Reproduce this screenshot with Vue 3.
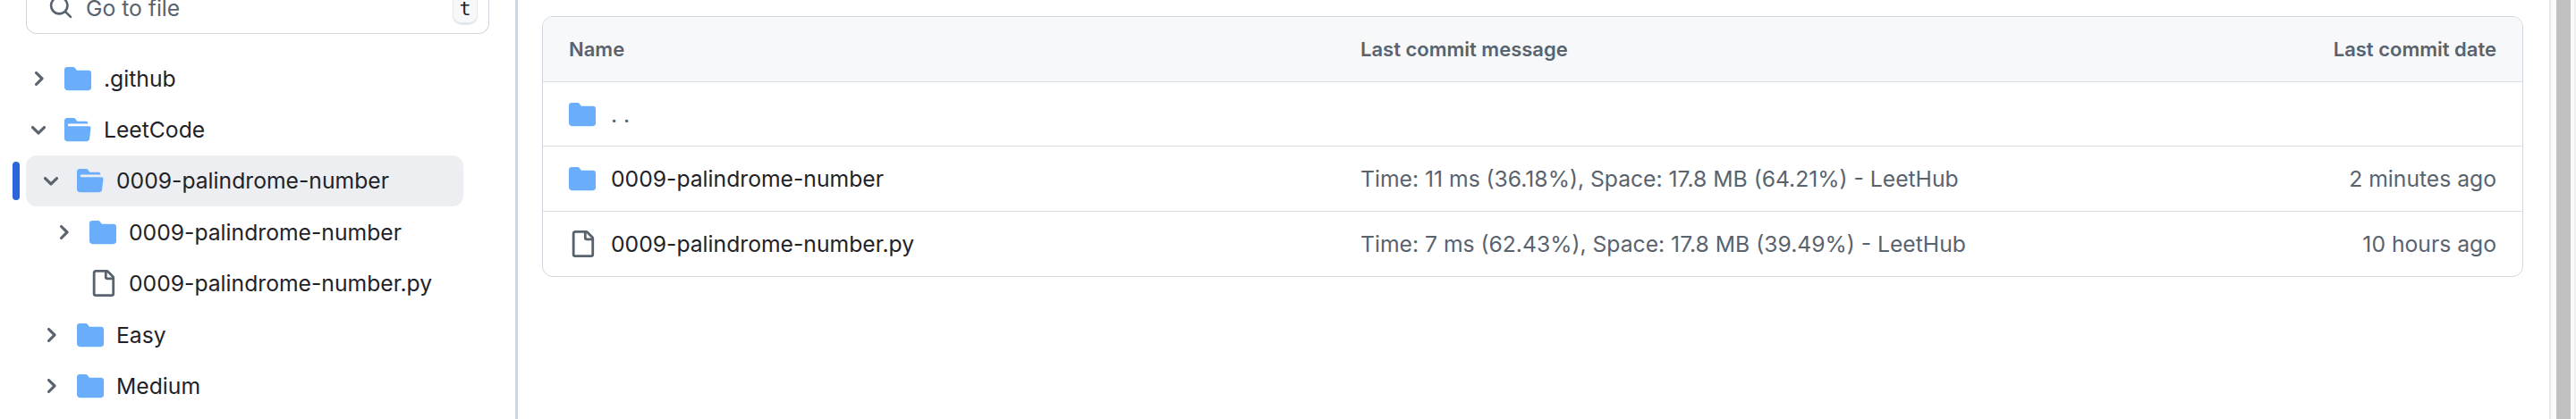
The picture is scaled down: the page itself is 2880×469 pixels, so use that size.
<template>
  <div class="page">
    <aside class="sidebar">
      <div class="search">
        <svg class="search-icon" viewBox="0 0 16 16" width="28" height="28"><path d="M10.68 11.74a6 6 0 0 1-7.922-8.982 6 6 0 0 1 8.982 7.922l3.04 3.04a.749.749 0 0 1-.326 1.275.749.749 0 0 1-.734-.215ZM11.5 7a4.499 4.499 0 1 0-8.997 0A4.499 4.499 0 0 0 11.5 7Z" /></svg>
        <span class="search-text">Go to file</span>
        <kbd class="key">t</kbd>
      </div>
      <ul class="tree">
        <li
          v-for="item in tree"
          :key="item.name + item.level"
          class="tree-row"
          :class="[`level-${item.level}`, { selected: item.selected }]"
        >
          <svg v-if="item.type === 'dir'" class="chev" viewBox="0 0 12 12" width="24" height="24">
            <path v-if="item.open" d="M6 8.825c-.2 0-.4-.1-.5-.2l-3.3-3.3c-.3-.3-.3-.8 0-1.1.3-.3.8-.3 1.1 0l2.7 2.7 2.7-2.7c.3-.3.8-.3 1.1 0 .3.3.3.8 0 1.1l-3.2 3.2c-.2.2-.4.3-.6.3Z" />
            <path v-else d="M4.7 10c-.2 0-.4-.1-.5-.2-.3-.3-.3-.8 0-1.1L6.9 6 4.2 3.3c-.3-.3-.3-.8 0-1.1.3-.3.8-.3 1.1 0l3.3 3.2c.3.3.3.8 0 1.1L5.3 9.7c-.2.2-.4.3-.6.3Z" />
          </svg>
          <span v-else class="chev"></span>
          <svg v-if="item.type === 'dir' && item.open" class="icon folder" viewBox="0 0 16 16" width="30" height="30"><path d="M.513 1.513A1.75 1.75 0 0 1 1.75 1h3.5c.55 0 1.07.26 1.4.7l.9 1.2a.25.25 0 0 0 .2.1H13a1 1 0 0 1 1 1v.5H2.75a.75.75 0 0 0 0 1.5h11.978a1 1 0 0 1 .994 1.117L15 13.25A1.75 1.75 0 0 1 13.25 15H1.75A1.75 1.75 0 0 1 0 13.25V2.75c0-.464.184-.91.513-1.237Z" /></svg>
          <svg v-else-if="item.type === 'dir'" class="icon folder" viewBox="0 0 16 16" width="30" height="30"><path d="M1.75 1A1.75 1.75 0 0 0 0 2.75v10.5C0 14.216.784 15 1.75 15h12.5A1.75 1.75 0 0 0 16 13.25v-8.5A1.75 1.75 0 0 0 14.25 3H7.5a.25.25 0 0 1-.2-.1l-.9-1.2C6.07 1.26 5.55 1 5 1H1.75Z" /></svg>
          <svg v-else class="icon file" viewBox="0 0 16 16" width="30" height="30"><path d="M2 1.75C2 .784 2.784 0 3.75 0h6.586c.464 0 .909.184 1.237.513l2.914 2.914c.329.328.513.773.513 1.237v9.586A1.75 1.75 0 0 1 13.25 16h-9.5A1.75 1.75 0 0 1 2 14.25Zm1.75-.25a.25.25 0 0 0-.25.25v12.5c0 .138.112.25.25.25h9.5a.25.25 0 0 0 .25-.25V6h-2.75A1.75 1.75 0 0 1 9 4.25V1.5Zm6.75.062V4.25c0 .138.112.25.25.25h2.688l-.011-.013-2.914-2.914-.013-.011Z" /></svg>
          <span class="tree-name">{{ item.name }}</span>
        </li>
      </ul>
    </aside>
    <main class="content">
      <div class="table">
        <div class="row head">
          <div class="col-name">Name</div>
          <div class="col-msg">Last commit message</div>
          <div class="col-date">Last commit date</div>
        </div>
        <div v-for="row in rows" :key="row.name" class="row">
          <div class="col-name name-cell">
            <svg v-if="row.type === 'dir'" class="icon folder" viewBox="0 0 16 16" width="30" height="30"><path d="M1.75 1A1.75 1.75 0 0 0 0 2.75v10.5C0 14.216.784 15 1.75 15h12.5A1.75 1.75 0 0 0 16 13.25v-8.5A1.75 1.75 0 0 0 14.25 3H7.5a.25.25 0 0 1-.2-.1l-.9-1.2C6.07 1.26 5.55 1 5 1H1.75Z" /></svg>
            <svg v-else class="icon file" viewBox="0 0 16 16" width="30" height="30"><path d="M2 1.75C2 .784 2.784 0 3.75 0h6.586c.464 0 .909.184 1.237.513l2.914 2.914c.329.328.513.773.513 1.237v9.586A1.75 1.75 0 0 1 13.25 16h-9.5A1.75 1.75 0 0 1 2 14.25Zm1.75-.25a.25.25 0 0 0-.25.25v12.5c0 .138.112.25.25.25h9.5a.25.25 0 0 0 .25-.25V6h-2.75A1.75 1.75 0 0 1 9 4.25V1.5Zm6.75.062V4.25c0 .138.112.25.25.25h2.688l-.011-.013-2.914-2.914-.013-.011Z" /></svg>
            <span :class="{ dots: row.name === '. .' }">{{ row.name }}</span>
          </div>
          <div class="col-msg">{{ row.msg }}</div>
          <div class="col-date">{{ row.date }}</div>
        </div>
      </div>
    </main>
    <div class="scrollbar"><div class="thumb"></div></div>
  </div>
</template>

<script setup>
const tree = [
  { name: '.github', type: 'dir', level: 0 },
  { name: 'LeetCode', type: 'dir', level: 0, open: true },
  { name: '0009-palindrome-number', type: 'dir', level: 1, open: true, selected: true },
  { name: '0009-palindrome-number', type: 'dir', level: 2 },
  { name: '0009-palindrome-number.py', type: 'file', level: 2 },
  { name: 'Easy', type: 'dir', level: 1 },
  { name: 'Medium', type: 'dir', level: 1 }
]

const rows = [
  { name: '. .', type: 'dir', msg: '', date: '' },
  { name: '0009-palindrome-number', type: 'dir', msg: 'Time: 11 ms (36.18%), Space: 17.8 MB (64.21%) - LeetHub', date: '2 minutes ago' },
  { name: '0009-palindrome-number.py', type: 'file', msg: 'Time: 7 ms (62.43%), Space: 17.8 MB (39.49%) - LeetHub', date: '10 hours ago' }
]
</script>

<style scoped>
.page {
  display: flex;
  width: 2880px;
  height: 469px;
  overflow: hidden;
  background: #fff;
  color: #1f2328;
  font-family: Inter, "Liberation Sans", sans-serif;
  font-size: 24.7px;
}

.sidebar {
  width: 579px;
  flex: none;
  height: 469px;
  box-sizing: border-box;
  border-right: 3px solid #d0d7de;
  padding-left: 29px;
}

.search {
  display: flex;
  align-items: center;
  width: 518px;
  height: 38px;
  box-sizing: border-box;
  border: 1px solid #d0d7de;
  border-top: none;
  border-radius: 0 0 12px 12px;
  padding: 0 12px 0 24px;
  color: #59636e;
}

.search-icon {
  fill: #59636e;
  margin-top: -22px;
}

.search-text {
  margin-left: 14px;
  margin-top: -20px;
}

.key {
  margin-left: auto;
  margin-top: -9px;
  width: 28px;
  height: 28px;
  box-sizing: border-box;
  border: 1px solid #e4e8ec;
  border-top: none;
  border-bottom-width: 3px;
  border-radius: 0 0 10px 10px;
  background: #f6f8fa;
  color: #1f2328;
  font-family: "DejaVu Sans Mono", monospace;
  font-size: 22px;
  line-height: 20px;
  text-align: center;
}

.tree {
  list-style: none;
  margin: 21px 0 0;
  padding: 0;
  display: flex;
  flex-direction: column;
}

.tree-row {
  position: relative;
  display: flex;
  align-items: center;
  height: 57.4px;
  width: 489px;
  box-sizing: border-box;
  border-radius: 12px;
}

.level-0 { padding-left: 2px; }
.level-1 { padding-left: 16px; }
.level-2 { padding-left: 30px; }

.selected {
  background: #eceef1;
}

.selected::before {
  content: "";
  position: absolute;
  left: -15px;
  top: 7px;
  width: 8px;
  height: 43px;
  border-radius: 4px;
  background: #2a66d9;
}

.chev {
  width: 24px;
  height: 24px;
  flex: none;
  fill: #59636e;
}

.icon {
  flex: none;
}

.folder {
  fill: #6aaefb;
}

.file {
  fill: #59636e;
}

.tree-row .icon {
  margin-left: 17px;
}

.tree-name {
  margin-left: 14px;
  white-space: nowrap;
}

.content {
  flex: 1;
  min-width: 0;
  padding: 18px 0 0 27px;
}

.table {
  width: 2215px;
  box-sizing: border-box;
  border: 1px solid #d0d7de;
  border-radius: 12px;
  overflow: hidden;
}

.row {
  display: flex;
  align-items: center;
  height: 73px;
  box-sizing: border-box;
  border-top: 1px solid #d8dee4;
}

.row:first-child {
  border-top: none;
  height: 72px;
}

.row:nth-child(2) {
  height: 72px;
}

.head {
  background: #f6f8fa;
  color: #59636e;
  font-weight: 600;
  font-size: 22px;
}

.col-name {
  width: 914px;
  flex: none;
  padding-left: 29px;
  box-sizing: border-box;
}

.name-cell {
  display: flex;
  align-items: center;
  gap: 17px;
}

.dots {
  color: #59636e;
}

.col-msg {
  flex: 1;
  color: #59636e;
}

.col-date {
  padding-right: 29px;
  color: #59636e;
  text-align: right;
}

.scrollbar {
  flex: none;
  width: 30px;
  margin-left: -30px;
  height: 469px;
  box-sizing: border-box;
  padding-left: 6px;
  border-left: 2px solid #e8e8e8;
  border-right: 2px solid #f0f0f0;
  background: #fafafa;
}

.thumb {
  width: 16px;
  height: 100%;
  background: #c1c1c1;
}
</style>
